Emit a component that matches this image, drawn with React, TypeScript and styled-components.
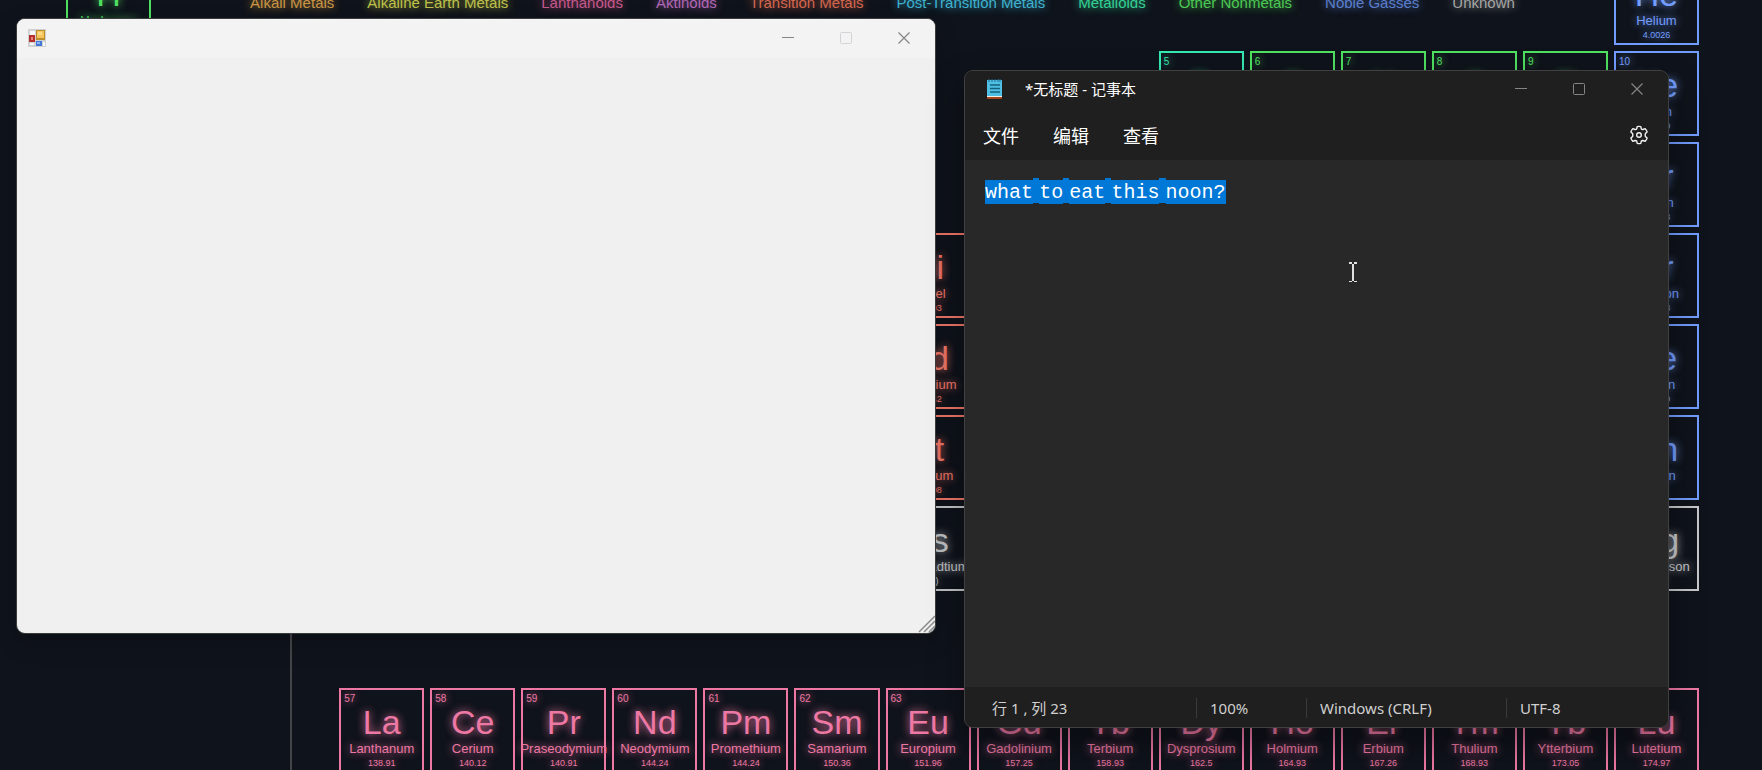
import React from "react";
import styled, { createGlobalStyle, css } from "styled-components";

const GlobalStyle = createGlobalStyle`
  *, *::before, *::after { box-sizing: border-box; }
  html, body { margin: 0; background: #0f131b; }
  button { font: inherit; color: inherit; background: none; border: 0; padding: 0; margin: 0; }
`;

const uiFont = `"Noto Sans", "Noto Sans CJK SC", sans-serif`;

const Desktop = styled.main`
  position: relative;
  height: 100vh;
  overflow: hidden;
  background: #0f131b;
  font-family: "Liberation Sans", Arial, sans-serif;
`;

/* ---------- periodic table ---------- */

const Board = styled.section`
  display: grid;
  grid-template-columns: repeat(18, minmax(0, 1fr));
  grid-auto-rows: 85px;
  gap: 6px;
  margin-top: -40px;
  padding: 0 63px 0 66px;
`;

const Legend = styled.ul`
  grid-column: 3 / 17;
  grid-row: 1;
  display: flex;
  justify-content: center;
  gap: 33px;
  margin: 34px 0 0;
  padding: 0;
  list-style: none;
  white-space: nowrap;
  font-size: 15px;
  line-height: 18px;
`;

const LegendItem = styled.li<{ $color: string }>`
  color: ${(p) => p.$color};
  text-shadow: 0 0 8px ${(p) => p.$color};
`;

const Cell = styled.article<{ $color: string; $col: number; $row: number }>`
  grid-column: ${(p) => p.$col};
  grid-row: ${(p) => p.$row};
  display: flex;
  flex-direction: column;
  align-items: center;
  border: 2px solid ${(p) => p.$color};
  color: ${(p) => p.$color};
  text-shadow: 0 0 8px ${(p) => p.$color};
  white-space: nowrap;
`;

const AtomicNumber = styled.span`
  align-self: flex-start;
  padding: 3px 0 0 3px;
  font-size: 10px;
  line-height: 12px;
`;

const Symbol = styled.span`
  font-size: 34px;
  line-height: 34px;
`;

const ElementName = styled.span`
  font-size: 13px;
  line-height: 20px;
`;

const Mass = styled.span`
  font-size: 9px;
  line-height: 9px;
`;

const Guide = styled.div`
  grid-column: 3;
  grid-row: 8 / 10;
  margin-left: 42px;
  border-left: 2px solid #444548;
`;

/* ---------- windows ---------- */

const windowBase = css`
  position: absolute;
  display: flex;
  flex-direction: column;
  overflow: hidden;
  border-radius: 9px;
  font-family: ${uiFont};
`;

const FormWindow = styled.section`
  ${windowBase}
  top: 18px;
  left: 16px;
  width: 52.2%;
  border: 1px solid #3b3c3d;
  background: #f0f0f0;
  box-shadow: 0 8px 24px rgba(0, 0, 0, 0.2);
`;

const FormTitleBar = styled.header`
  display: flex;
  align-items: center;
  height: 39px;
  padding: 0 2px 2px 11px;
  background: #f3f3f3;
`;

const FormClient = styled.div`
  display: flex;
  align-items: flex-end;
  justify-content: flex-end;
  min-height: 575px;
`;

const NotepadWindow = styled.section`
  ${windowBase}
  top: 70px;
  left: 964px;
  width: 40%;
  border: 1px solid #404040;
  background: #282828;
  color: #fff;
  box-shadow: 0 16px 32px 2px rgba(0, 0, 0, 0.35);
`;

const NotepadTitleBar = styled.header`
  display: flex;
  align-items: center;
  height: 36px;
  padding: 0 2px 0 21px;
  background: #1f1f1f;
`;

const Title = styled.h1`
  margin: 0 0 0 22px;
  font-size: 15px;
  line-height: 20px;
  font-weight: 400;
`;

const Controls = styled.div<{ $tone: string }>`
  display: flex;
  margin-left: auto;
  align-self: stretch;
  color: ${(p) => p.$tone};
`;

const ControlButton = styled.button`
  display: grid;
  place-items: center;
  width: 58px;

  &:disabled { color: #d2d4d8; }
`;

const MenuBar = styled.nav`
  display: flex;
  align-items: center;
  gap: 34px;
  height: 53px;
  padding: 4px 19px 0 18px;
  background: #1f1f1f;
`;

const MenuButton = styled.button`
  font-size: 18px;
  line-height: 26px;
`;

const SettingsButton = styled.button`
  display: grid;
  place-items: center;
  margin-left: auto;
  padding-bottom: 2px;
`;

const Editor = styled.div`
  min-height: 527px;
  padding: 17px 20px;
  outline: 0;
  font-family: "Liberation Mono", "Courier New", monospace;
  font-size: 20px;
  line-height: 32px;
  white-space: pre-wrap;
`;

const Selection = styled.mark`
  padding-top: 1px;
  background: #0078d7;
  color: #fff;
`;

const WordSpace = styled.span`
  background: #0078d7;
  font-family: "Liberation Sans", Arial, sans-serif;
  font-size: 22px;
  line-height: 1;
`;

const StatusBar = styled.footer`
  display: flex;
  align-items: center;
  height: 40px;
  padding-top: 2px;
  background: #1f1f1f;
  color: #d0d0d0;
  font-size: 15px;
  line-height: 20px;
`;

const StatusItem = styled.span<{ $width?: number; $first?: boolean }>`
  flex: ${(p) => (p.$width ? `0 0 ${p.$width}px` : "1")};
  padding-left: ${(p) => (p.$first ? 27 : 13)}px;
  border-left: ${(p) => (p.$first ? "0" : "1px solid #3a3a3a")};
`;

const TextCursor = styled.svg`
  position: absolute;
  top: 262px;
  left: 1349px;
`;

/* ---------- data ---------- */

const colors = {
  pink: "#ee78a4",
  green: "#4fe060",
  teal: "#35e8b0",
  blue: "#729dff",
  orange: "#f4786a",
  gray: "#c6c8ca",
};

const legend: [string, string][] = [
  ["Alkali Metals", "#c99645"],
  ["Alkaline Earth Metals", "#bfc24a"],
  ["Lanthanoids", "#c4598a"],
  ["Aktinoids", "#b068b4"],
  ["Transition Metals", "#d3674f"],
  ["Post-Transition Metals", "#3fb2cf"],
  ["Metalloids", "#35cf94"],
  ["Other Nonmetals", "#4cc753"],
  ["Noble Gasses", "#5a7ecb"],
  ["Unknown", "#a5a5a5"],
];

type El = [number, string, string, string, keyof typeof colors, number, number];

const elements: El[] = [
  [1, "H", "Hydrogen", "1.008", "green", 1, 1],
  [2, "He", "Helium", "4.0026", "blue", 18, 1],
  [5, "B", "Boron", "10.81", "teal", 13, 2],
  [6, "C", "Carbon", "12.011", "green", 14, 2],
  [7, "N", "Nitrogen", "14.007", "green", 15, 2],
  [8, "O", "Oxygen", "15.999", "green", 16, 2],
  [9, "F", "Fluorine", "18.998", "green", 17, 2],
  [10, "Ne", "Neon", "20.180", "blue", 18, 2],
  [18, "Ar", "Argon", "39.948", "blue", 18, 3],
  [28, "Ni", "Nickel", "58.693", "orange", 10, 4],
  [36, "Kr", "Krypton", "83.798", "blue", 18, 4],
  [46, "Pd", "Palladium", "106.42", "orange", 10, 5],
  [54, "Xe", "Xenon", "131.29", "blue", 18, 5],
  [78, "Pt", "Platinum", "195.08", "orange", 10, 6],
  [86, "Rn", "Radon", "(222)", "blue", 18, 6],
  [110, "Ds", "Darmstadtium", "(281)", "gray", 10, 7],
  [118, "Og", "Oganesson", "(294)", "gray", 18, 7],
  [57, "La", "Lanthanum", "138.91", "pink", 4, 9],
  [58, "Ce", "Cerium", "140.12", "pink", 5, 9],
  [59, "Pr", "Praseodymium", "140.91", "pink", 6, 9],
  [60, "Nd", "Neodymium", "144.24", "pink", 7, 9],
  [61, "Pm", "Promethium", "144.24", "pink", 8, 9],
  [62, "Sm", "Samarium", "150.36", "pink", 9, 9],
  [63, "Eu", "Europium", "151.96", "pink", 10, 9],
  [64, "Gd", "Gadolinium", "157.25", "pink", 11, 9],
  [65, "Tb", "Terbium", "158.93", "pink", 12, 9],
  [66, "Dy", "Dysprosium", "162.5", "pink", 13, 9],
  [67, "Ho", "Holmium", "164.93", "pink", 14, 9],
  [68, "Er", "Erbium", "167.26", "pink", 15, 9],
  [69, "Tm", "Thulium", "168.93", "pink", 16, 9],
  [70, "Yb", "Ytterbium", "173.05", "pink", 17, 9],
  [71, "Lu", "Lutetium", "174.97", "pink", 18, 9],
];

const words = ["what", "to", "eat", "this", "noon?"];

/* ---------- icons ---------- */

const FormIcon = () => (
  <svg width="18" height="18" viewBox="0 0 18 18" aria-hidden="true">
    <rect width="18" height="18" fill="#d0d1d3" />
    <rect x="2" y="2" width="5" height="4" fill="#f8f8f8" />
    <rect x="2" y="14" width="4" height="2" fill="#f8f8f8" />
    <rect x="15" y="13" width="2" height="4" fill="#f8f8f8" />
    <rect x="1" y="6" width="6" height="7" fill="#b3302c" />
    <rect x="3" y="8" width="2" height="3" fill="#e9847c" />
    <rect x="8" y="1" width="9" height="10" fill="#bd8f2c" />
    <rect x="9" y="2" width="7" height="7" fill="#f6c558" />
    <rect x="10" y="3" width="4" height="3" fill="#fbd888" />
    <rect x="8" y="12" width="6" height="5" fill="#4478d8" />
    <rect x="9" y="13" width="3" height="2" fill="#8db4f6" />
  </svg>
);

const NotepadIcon = () => (
  <svg width="17" height="20" viewBox="0 0 17 20" aria-hidden="true">
    <rect x="1" y="17" width="15" height="3" rx="1" fill="#a2441c" />
    <rect x="1" y="16" width="15" height="2" fill="#f3efe8" />
    <rect x="1" y="1" width="15" height="16" fill="#4fbfe3" />
    <path d="M3 0v3M6 0v3M9 0v3M12 0v3M14 0v3" stroke="#1b6e93" />
    <path d="M4 6h10M4 9.500h10M4 13h10" stroke="#12627f" strokeWidth="1.500" />
  </svg>
);

const Minimize = () => (
  <svg width="12" height="12" viewBox="0 0 12 12" aria-hidden="true">
    <path d="M0 5.500h12" stroke="currentColor" />
  </svg>
);

const Maximize = () => (
  <svg width="12" height="12" viewBox="0 0 12 12" fill="none" aria-hidden="true">
    <rect x="0.500" y="0.500" width="11" height="11" rx="1" stroke="currentColor" />
  </svg>
);

const Close = () => (
  <svg width="12" height="12" viewBox="0 0 12 12" aria-hidden="true">
    <path d="M0.500 0.500l11 11M11.500 0.500l-11 11" stroke="currentColor" strokeWidth="1.200" />
  </svg>
);

const Gear = () => (
  <svg width="20" height="20" viewBox="0 0 20 20" fill="none" stroke="#f2f2f2" strokeWidth="1.400" strokeLinejoin="round" aria-hidden="true">
    <path d="M8.200 1.600Q10 1.100 11.800 1.600L12.300 3.900Q13 4.600 14 4.500L16.200 3.700Q17.600 5.100 18.100 6.900L16.400 8.600Q15.900 10 16.400 11.400L18.100 13.100Q17.600 14.900 16.200 16.300L14 15.500Q13 15.400 12.300 16.100L11.800 18.400Q10 18.900 8.200 18.400L7.700 16.100Q7 15.400 6 15.500L3.800 16.300Q2.400 14.900 1.900 13.100L3.600 11.400Q4.100 10 3.600 8.600L1.900 6.900Q2.400 5.100 3.800 3.700L6 4.500Q7 4.600 7.700 3.900Z" />
    <circle cx="10" cy="10" r="2.300" />
  </svg>
);

const SizeGrip = () => (
  <svg width="17" height="18" viewBox="0 0 17 18" aria-hidden="true">
    <path d="M1 17L17 1M6 17L17 6M11 17L17 11" stroke="#8a8a8a" strokeWidth="1.500" />
  </svg>
);

/* ---------- page ---------- */

export default function App() {
  return (
    <Desktop>
      <GlobalStyle />
      <Board aria-label="Periodic table">
        <Legend>
          {legend.map(([label, color]) => (
            <LegendItem key={label} $color={color}>{label}</LegendItem>
          ))}
        </Legend>
        {elements.map(([n, symbol, name, mass, tone, col, row]) => (
          <Cell key={n} $color={colors[tone]} $col={col} $row={row}>
            <AtomicNumber>{n}</AtomicNumber>
            <Symbol>{symbol}</Symbol>
            <ElementName>{name}</ElementName>
            <Mass>{mass}</Mass>
          </Cell>
        ))}
        <Guide />
      </Board>

      <FormWindow aria-label="Form">
        <FormTitleBar>
          <FormIcon />
          <Controls $tone="#858585">
            <ControlButton aria-label="Minimize"><Minimize /></ControlButton>
            <ControlButton aria-label="Maximize" disabled><Maximize /></ControlButton>
            <ControlButton aria-label="Close"><Close /></ControlButton>
          </Controls>
        </FormTitleBar>
        <FormClient><SizeGrip /></FormClient>
      </FormWindow>

      <NotepadWindow aria-label="记事本">
        <NotepadTitleBar>
          <NotepadIcon />
          <Title>*无标题 - 记事本</Title>
          <Controls $tone="#858585">
            <ControlButton aria-label="最小化"><Minimize /></ControlButton>
            <ControlButton aria-label="最大化"><Maximize /></ControlButton>
            <ControlButton aria-label="关闭"><Close /></ControlButton>
          </Controls>
        </NotepadTitleBar>
        <MenuBar>
          <MenuButton>文件</MenuButton>
          <MenuButton>编辑</MenuButton>
          <MenuButton>查看</MenuButton>
          <SettingsButton aria-label="设置"><Gear /></SettingsButton>
        </MenuBar>
        <Editor role="textbox" aria-multiline="true" aria-label="文本编辑器" contentEditable suppressContentEditableWarning spellCheck={false}>
          {words.map((word, i) => (
            <React.Fragment key={word}>
              {i > 0 && <WordSpace> </WordSpace>}
              <Selection>{word}</Selection>
            </React.Fragment>
          ))}
        </Editor>
        <StatusBar>
          <StatusItem $first $width={231}>行 1 , 列 23</StatusItem>
          <StatusItem $width={110}>100%</StatusItem>
          <StatusItem $width={200}>Windows (CRLF)</StatusItem>
          <StatusItem>UTF-8</StatusItem>
        </StatusBar>
      </NotepadWindow>

      <TextCursor width="8" height="20" viewBox="0 0 8 20" aria-hidden="true">
        <path d="M0 0h3v2H0zM5 0h3v2H5zM3 2h2v17H3zM0 19h3v1H0zM5 19h3v1H5z" fill="#e0e0e0" />
      </TextCursor>
    </Desktop>
  );
}
